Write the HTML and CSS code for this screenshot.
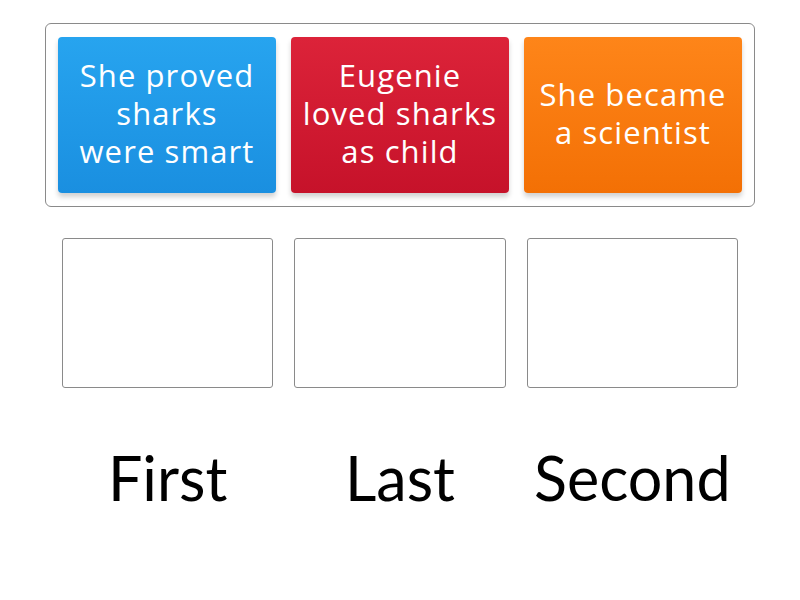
FILE: index.html
```html
<!DOCTYPE html>
<html>
<head>
    <title>Order the story</title>
    <link rel="stylesheet" href="styles.css">
</head>
<body>

    <div class="game">
        <!-- Tiles waiting to be placed -->
        <div class="tray">
            <div class="tile blue">She proved<br>sharks<br>were smart</div>
            <div class="tile red">Eugenie<br>loved sharks<br>as child</div>
            <div class="tile orange">She became<br>a scientist</div>
        </div>

        <!-- Empty drop targets -->
        <div class="slots">
            <div class="slot"></div>
            <div class="slot"></div>
            <div class="slot"></div>
        </div>

        <!-- Slot labels -->
        <div class="labels">
            <div class="label">First</div>
            <div class="label">Last</div>
            <div class="label">Second</div>
        </div>
    </div>

</body>
</html>
```

FILE: styles.css
```css
/* Main page styles */
body {
    margin: 0;
    padding: 0;
    background: #fff;
    font-family: Lato, "Open Sans", sans-serif;
}

.game {
    width: 710px;
    padding-top: 23px;
    margin-left: 45px;
}

/* Tile tray */
.tray {
    display: flex;
    gap: 15px;
    height: 156px;
    padding: 13px 12px 13px 12px;
    border: 1px solid #8a8a8a;
    border-radius: 6px;
}

.tile {
    flex: 1;
    display: flex;
    align-items: center;
    justify-content: center;
    padding: 0 0 4px 0;
    text-align: center;
    color: #fff;
    font-family: "Open Sans", Lato, sans-serif;
    font-size: 31px;
    letter-spacing: 1.1px;
    line-height: 38px;
    white-space: nowrap;
    border-radius: 4px;
    box-shadow: 0 4px 5px rgba(0, 0, 0, 0.18);
}

.tile.blue {
    background: linear-gradient(#27a4ef, #1a8fe0);
}

.tile.red {
    background: linear-gradient(#dc2339, #c6122a);
}

.tile.orange {
    background: linear-gradient(#fe8519, #f37005);
}

/* Drop targets */
.slots {
    display: flex;
    gap: 21px;
    padding: 31px 17px 0 17px;
}

.slot {
    flex: 1;
    height: 148px;
    border: 1px solid #8a8a8a;
    border-radius: 3px;
}

/* Labels under targets */
.labels {
    display: flex;
    gap: 21px;
    padding: 46px 17px 0 17px;
}

.label {
    flex: 1;
    text-align: center;
    font-size: 61px;
    line-height: 88px;
    color: #000;
}
```
